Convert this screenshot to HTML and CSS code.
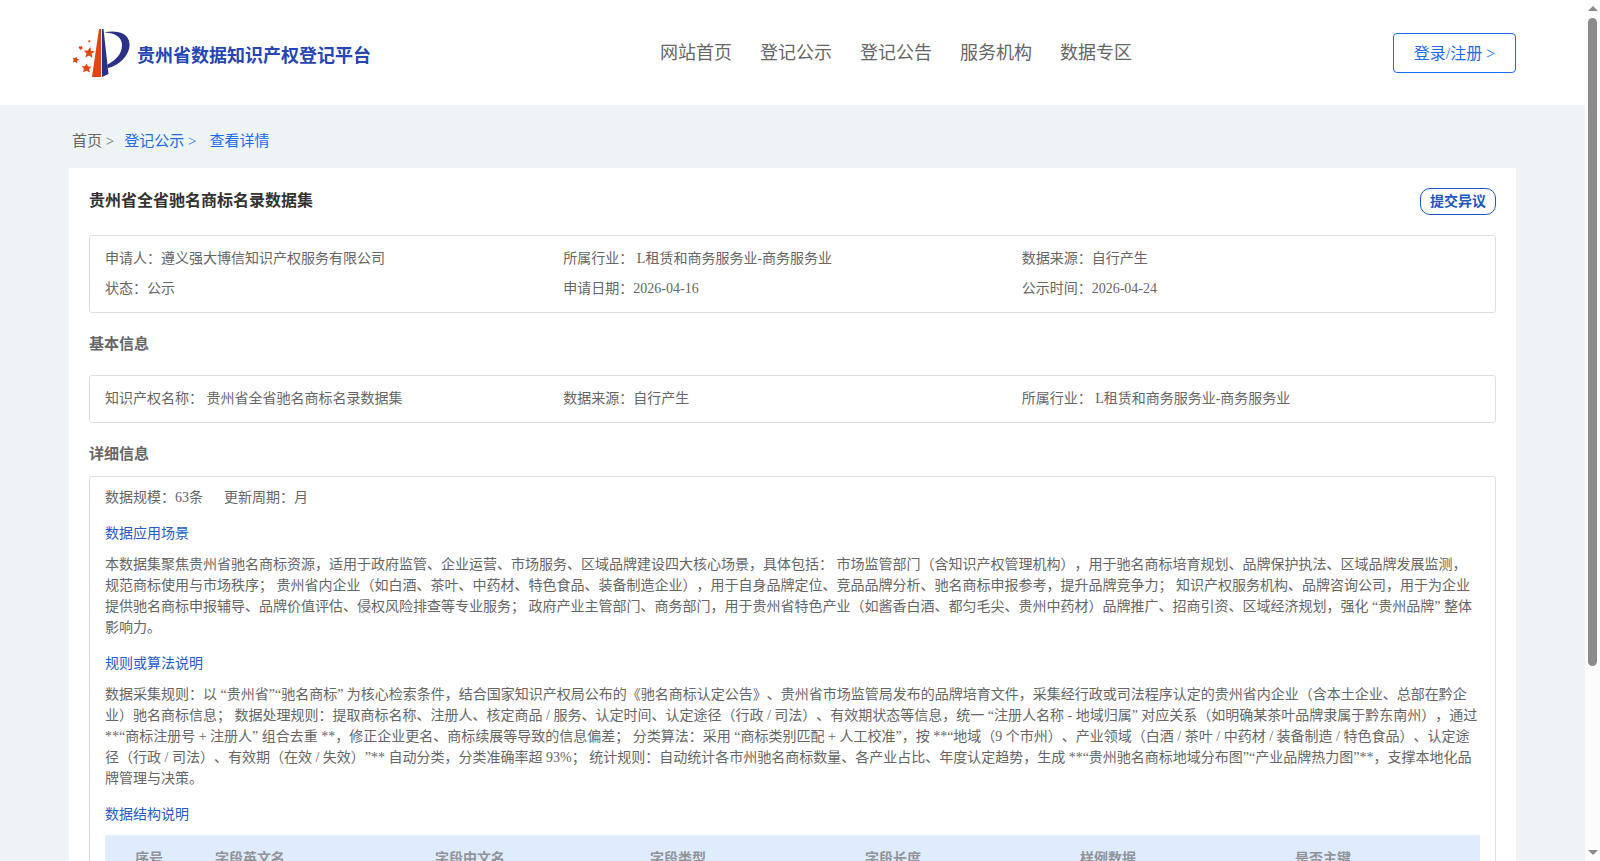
FILE: index.html
```html
<!DOCTYPE html>
<html lang="zh-CN">
<head>
    <meta charset="UTF-8">
    <meta name="viewport" content="width=device-width, initial-scale=1.0">
    <title>贵州省数据知识产权登记平台</title>
    <link rel="stylesheet" href="styles.css">
</head>
<body>

<header class="header">
    <div class="container header-inner">
        <div class="logo">
            <svg class="logo-icon" width="60" height="52" viewBox="0 0 60 52">
                <polygon points="27,1 29,1 29,49 20,49" fill="#e5430f"/>
                <polygon points="30,1 31.5,1 36.5,46 30,49" fill="#2b3186"/>
                <path d="M32 4.500C43 2 57 4 57.500 16C58 28 46 38 36 40L35 37C44 32 50 26 50 17C50 8 41 4.500 32 4.500Z" fill="#2b3186"/>
                <g fill="#e5430f">
                    <path d="M18.300 19L19 23L23 23.500L19.500 25.800L20.500 30L17 27.500L13.300 29.500L14.500 25.500L11.800 22.500L15.800 22.500Z"/>
                    <path d="M14.500 35.500L16 38.500L19.500 38.700L17 41L18 44.500L14.500 42.700L11 44.200L12 40.800L9.700 38.200L13 38.200Z"/>
                    <path d="M4.300 28.500L5 31L7.500 31.500L5.200 32.800L5.200 35.500L3.200 33.700L.600 34.500L1.700 32L.500 29.800L3 30.300Z"/>
                    <path d="M10 18L10.500 20.300L8.800 22L7.300 20.800L6.500 18.500L8.500 18.600Z"/>
                    <circle cx="17.300" cy="13.300" r="1.100"/>
                </g>
            </svg>
            <span class="logo-text">贵州省数据知识产权登记平台</span>
        </div>
        <nav class="nav">
            <a>网站首页</a>
            <a>登记公示</a>
            <a>登记公告</a>
            <a>服务机构</a>
            <a>数据专区</a>
        </nav>
        <button class="login-btn">登录/注册 &gt;</button>
    </div>
</header>

<main class="container">
    <div class="breadcrumb">
        <span>首页 &gt;</span>
        <a class="crumb-list">登记公示 &gt;</a>
        <a>查看详情</a>
    </div>

    <div class="card">
        <div class="card-head">
            <h1>贵州省全省驰名商标名录数据集</h1>
            <button class="objection-btn">提交异议</button>
        </div>

        <div class="info-box">
            <div>申请人：遵义强大博信知识产权服务有限公司</div>
            <div>所属行业： L租赁和商务服务业-商务服务业</div>
            <div>数据来源：自行产生</div>
            <div>状态：公示</div>
            <div>申请日期：2026-04-16</div>
            <div>公示时间：2026-04-24</div>
        </div>

        <h2 class="basic-title">基本信息</h2>
        <div class="info-box">
            <div>知识产权名称： 贵州省全省驰名商标名录数据集</div>
            <div>数据来源：自行产生</div>
            <div>所属行业： L租赁和商务服务业-商务服务业</div>
        </div>

        <h2 class="detail-title">详细信息</h2>
        <div class="detail-box">
            <div class="scale">
                <span>数据规模：63条</span>
                <span>更新周期：月</span>
            </div>

            <h3>数据应用场景</h3>
            <p>本数据集聚焦贵州省驰名商标资源，适用于政府监管、企业运营、市场服务、区域品牌建设四大核心场景，具体包括： 市场监管部门（含知识产权管理机构），用于驰名商标培育规划、品牌保护执法、区域品牌发展监测，规范商标使用与市场秩序； 贵州省内企业（如白酒、茶叶、中药材、特色食品、装备制造企业），用于自身品牌定位、竞品品牌分析、驰名商标申报参考，提升品牌竞争力； 知识产权服务机构、品牌咨询公司，用于为企业提供驰名商标申报辅导、品牌价值评估、侵权风险排查等专业服务； 政府产业主管部门、商务部门，用于贵州省特色产业（如酱香白酒、都匀毛尖、贵州中药材）品牌推广、招商引资、区域经济规划，强化 “贵州品牌” 整体影响力。</p>

            <h3>规则或算法说明</h3>
            <p>数据采集规则：以 “贵州省”“驰名商标” 为核心检索条件，结合国家知识产权局公布的《驰名商标认定公告》、贵州省市场监管局发布的品牌培育文件，采集经行政或司法程序认定的贵州省内企业（含本土企业、总部在黔企业）驰名商标信息； 数据处理规则：提取商标名称、注册人、核定商品 / 服务、认定时间、认定途径（行政 / 司法）、有效期状态等信息，统一 “注册人名称 - 地域归属” 对应关系（如明确某茶叶品牌隶属于黔东南州），通过 **“商标注册号 + 注册人” 组合去重 **，修正企业更名、商标续展等导致的信息偏差； 分类算法：采用 “商标类别匹配 + 人工校准”，按 **“地域（9 个市州）、产业领域（白酒 / 茶叶 / 中药材 / 装备制造 / 特色食品）、认定途径（行政 / 司法）、有效期（在效 / 失效）”** 自动分类，分类准确率超 93%； 统计规则：自动统计各市州驰名商标数量、各产业占比、年度认定趋势，生成 **“贵州驰名商标地域分布图”“产业品牌热力图”**，支撑本地化品牌管理与决策。</p>

            <h3>数据结构说明</h3>
            <div class="table-head">
                <span>序号</span>
                <span>字段英文名</span>
                <span>字段中文名</span>
                <span>字段类型</span>
                <span>字段长度</span>
                <span>样例数据</span>
                <span>是否主键</span>
            </div>
        </div>
    </div>
</main>

<div class="scrollbar">
    <i class="arrow-up"></i>
    <div class="thumb"></div>
    <i class="arrow-down"></i>
</div>

</body>
</html>
```
FILE: styles.css
```css
* {
    margin: 0;
    padding: 0;
    box-sizing: border-box;
}
body {
    height: 100vh;
    overflow: hidden;
    padding-right: 15px;
    background: #eef3f6;
    color: #666;
    font-family: "Liberation Serif", "Noto Sans CJK SC", serif;
    font-size: 14px;
    text-spacing-trim: space-all;
}
button {
    font-family: inherit;
    background: #fff;
    cursor: pointer;
}
.container {
    width: 1447px;
    margin: 0 auto;
}

/* header */
.header {
    height: 105px;
    background: #fff;
}
.header-inner {
    display: flex;
    align-items: flex-start;
    justify-content: space-between;
}
.logo {
    display: flex;
    width: 591px;
    padding: 28px 0 0 3px;
}
.logo-text {
    margin-left: 5px;
    font-size: 18px;
    line-height: 56px;
    font-weight: bold;
    color: #2546b5;
}
.nav {
    display: flex;
    flex: 1;
    gap: 28px;
    padding-top: 38px;
    font-size: 18px;
    line-height: 30px;
}
.login-btn {
    width: 123px;
    height: 40px;
    margin-top: 33px;
    padding-top: 1px;
    border: 1px solid #1a6df0;
    border-radius: 4px;
    color: #1a6df0;
    font-size: 16px;
    line-height: 37px;
}

/* breadcrumb */
.breadcrumb {
    display: flex;
    height: 63px;
    padding: 6px 0 0 3px;
    font-size: 15px;
    line-height: 61px;
}
.breadcrumb a {
    color: #1a6df0;
}
.breadcrumb .crumb-list {
    margin: 0 13px 0 10px;
}

/* card */
.card {
    padding: 20px 20px 40px;
    background: #fff;
}
.card-head {
    display: flex;
    justify-content: space-between;
    align-items: flex-start;
    height: 47px;
}
.card-head h1 {
    font-size: 16px;
    line-height: 26px;
    color: #333;
}
.objection-btn {
    width: 76px;
    height: 27px;
    border: 1px solid #1d57c4;
    border-radius: 10px;
    color: #1d57c4;
    font-size: 14px;
    line-height: 25px;
    font-weight: bold;
}
.info-box {
    display: grid;
    grid-template-columns: repeat(3, 1fr);
    padding: 8px 15px;
    border: 1px solid #ddd;
    border-radius: 3px;
    line-height: 30px;
}
h2 {
    font-size: 15px;
}
.basic-title {
    height: 62px;
    line-height: 63px;
}
.detail-title {
    height: 53px;
    line-height: 63px;
}
.detail-box {
    padding: 6px 15px 15px;
    border: 1px solid #ddd;
    border-radius: 3px;
}
.scale {
    display: flex;
    gap: 21px;
    line-height: 30px;
}
h3 {
    padding: 5px 0 4px;
    font-size: 14px;
    line-height: 32px;
    font-weight: normal;
    color: #1f5bcb;
}
p {
    padding-bottom: 5px;
    line-height: 21px;
}
.table-head {
    display: grid;
    grid-template-columns: 80px 220px repeat(4, 215px) 1fr;
    height: 48px;
    padding-left: 30px;
    background: #dfecfe;
    color: #909399;
    font-weight: bold;
    line-height: 48px;
}

/* scrollbar */
.scrollbar {
    position: fixed;
    top: 0;
    right: 0;
    width: 15px;
    height: 100vh;
    display: flex;
    flex-direction: column;
    align-items: center;
    padding: 6px 0;
    background: #fcfcfc;
}
.scrollbar .thumb {
    width: 9px;
    height: 648px;
    margin-top: 7px;
    border-radius: 5px;
    background: #8b8b8b;
}
.arrow-up,
.arrow-down {
    border: 5px solid transparent;
}
.arrow-up {
    border-top: 0;
    border-bottom-color: #8b8b8b;
}
.arrow-down {
    margin-top: auto;
    border-bottom: 0;
    border-top-color: #8b8b8b;
}
```
